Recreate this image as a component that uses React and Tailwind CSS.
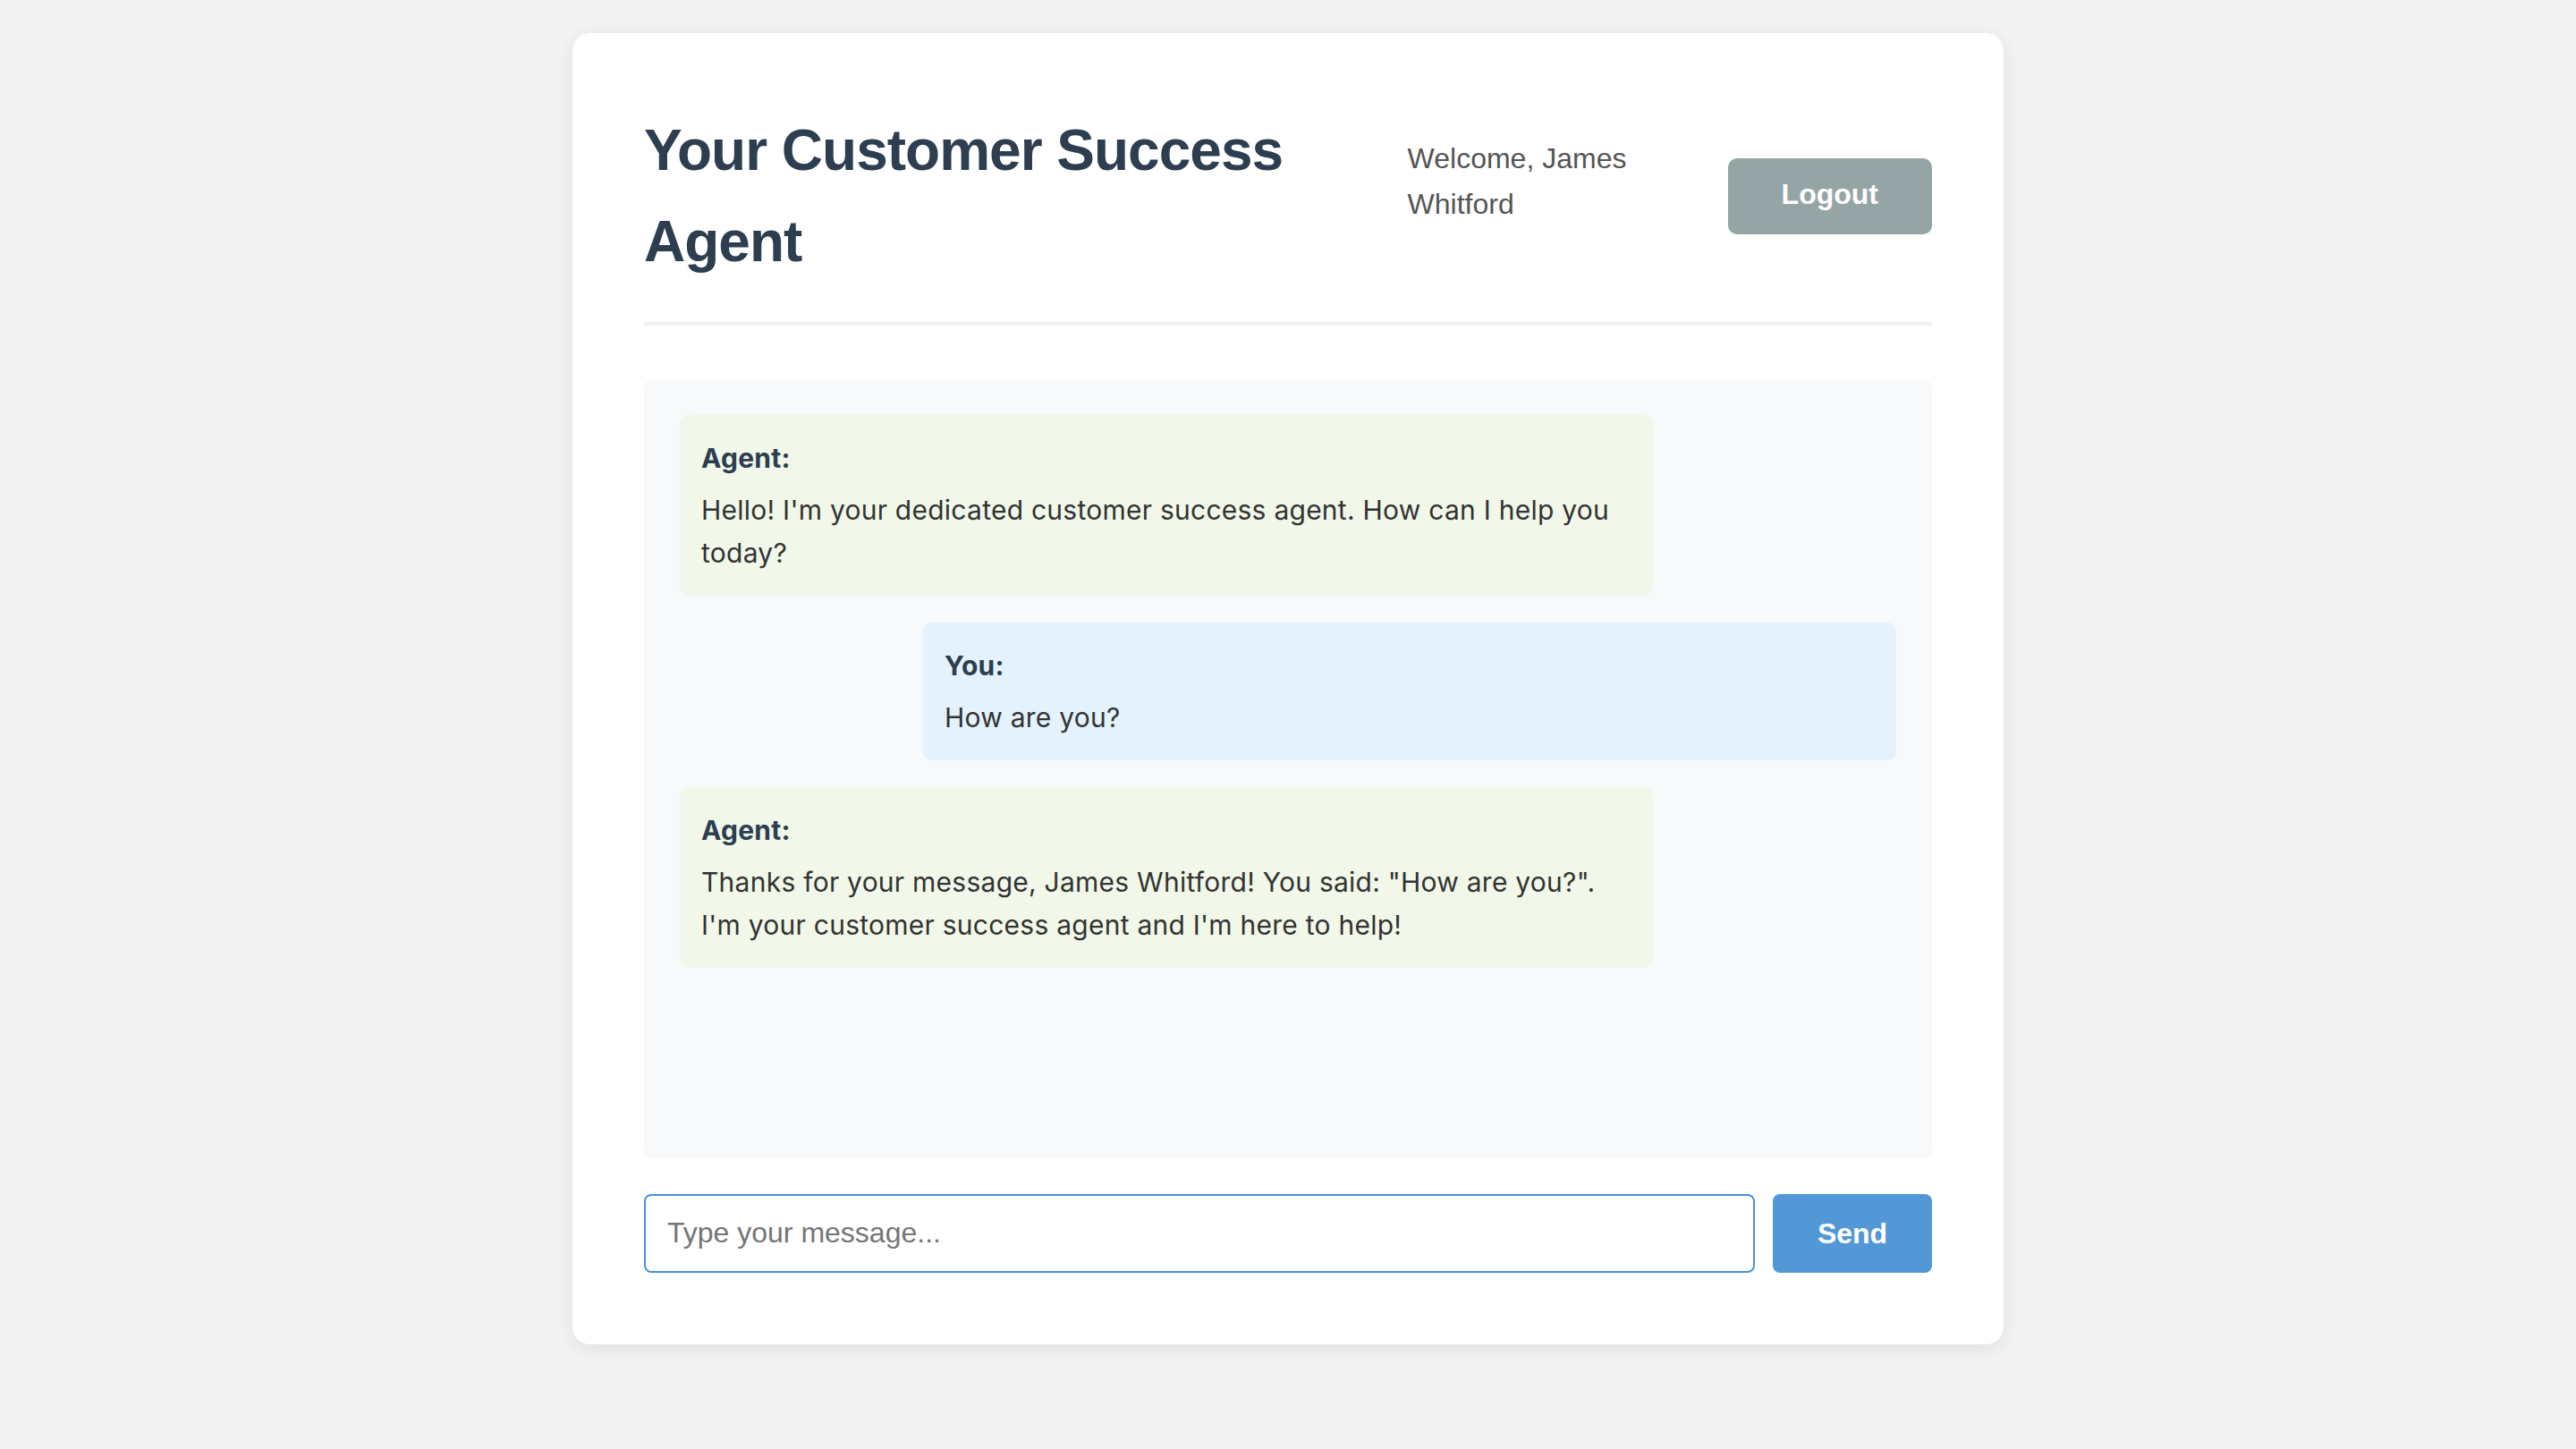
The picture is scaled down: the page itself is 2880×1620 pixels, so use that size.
import { useState } from "react";

const MESSAGES = [
  {
    from: "agent",
    text: "Hello! I'm your dedicated customer success agent. How can I help you today?",
  },
  { from: "user", text: "How are you?" },
  {
    from: "agent",
    text: 'Thanks for your message, James Whitford! You said: "How are you?". I\'m your customer success agent and I\'m here to help!',
  },
];

export default function App() {
  const [input, setInput] = useState("");

  return (
    <div className="min-h-screen bg-[#f2f2f2] pt-[37px] font-['Liberation_Sans',Arial,sans-serif]">
      <div className="mx-auto w-[1600px] rounded-[20px] bg-white p-[80px] shadow-[0_4px_20px_rgba(0,0,0,0.08)]">

        {/* header */}
        <div className="flex items-center justify-between border-b-4 border-[#ecf0f1] pb-[38px] mb-[60px]">
          <h1 className="flex-1 text-[64px] leading-[1.6] font-bold tracking-[-1px] text-[#2c3e50]">
            Your Customer Success Agent
          </h1>
          <div className="flex shrink-0 items-center gap-[40px]">
            <span className="w-[318px] mb-[32px] text-[32px] leading-[1.6] text-[#555]">
              Welcome, James Whitford
            </span>
            <button className="rounded-[10px] bg-[#95a5a6] px-[60px] pt-[22px] pb-[26px] text-[32px] leading-[37px] font-bold text-white cursor-pointer">
              Logout
            </button>
          </div>
        </div>

        {/* chat */}
        <div className="h-[871px] overflow-y-auto rounded-[10px] bg-[#f8f9fa] p-[40px] font-['Inter',sans-serif] tracking-[0.25px]">
          {MESSAGES.map((m, i) => (
            <div
              key={i}
              className={
                m.from === "agent"
                  ? "mb-[30px] w-[80%] rounded-[10px] bg-[#f1f8e9] p-[24px]"
                  : "mb-[30px] ml-auto w-[80%] rounded-[10px] bg-[#e3f2fd] p-[24px]"
              }
            >
              <div className="mb-[10px] text-[30px] leading-[48px] font-bold text-[#2c3e50]">
                {m.from === "agent" ? "Agent:" : "You:"}
              </div>
              <div className="text-[30px] leading-[48px] text-[#333]">{m.text}</div>
            </div>
          ))}
        </div>

        {/* input */}
        <div className="mt-[40px] flex gap-[20px]">
          <input
            autoFocus
            value={input}
            onChange={(e) => setInput(e.target.value)}
            placeholder="Type your message..."
            className="h-[88px] flex-1 rounded-[8px] border-2 border-[#4a90d9] px-[24px] text-[32px] text-[#333] placeholder:text-[#757575] outline-none font-['Liberation_Sans',Arial,sans-serif]"
          />
          <button className="h-[88px] w-[178px] rounded-[8px] bg-[#5398d6] text-[32px] font-bold text-white cursor-pointer">
            Send
          </button>
        </div>

      </div>
    </div>
  );
}
